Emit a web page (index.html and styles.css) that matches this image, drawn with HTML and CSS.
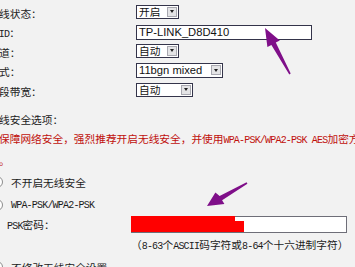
FILE: index.html
```html
<!DOCTYPE html>
<html lang="zh">
<head>
<meta charset="utf-8">
<title>无线设置</title>
<link rel="stylesheet" href="styles.css">
</head>
<body>
<div class="page">
  <div class="form">
    <div class="row">
      <span class="label">无线状态：</span>
      <div class="select w43"><span class="val">开启</span><span class="btn"></span></div>
    </div>
    <div class="row">
      <span class="label"><span class="mono">SSID</span>：</span>
      <div class="input w176"><span class="val en">TP-LINK_D8D410</span></div>
    </div>
    <div class="row">
      <span class="label">信道：</span>
      <div class="select w43"><span class="val">自动</span><span class="btn"></span></div>
    </div>
    <div class="row">
      <span class="label">模式：</span>
      <div class="select w87"><span class="val en">11bgn mixed</span><span class="btn"></span></div>
    </div>
    <div class="row">
      <span class="label">频段带宽：</span>
      <div class="select w57"><span class="val">自动</span><span class="btn"></span></div>
    </div>
  </div>
  <div class="security">
    <div class="title">无线安全选项：</div>
    <p class="warn">为保障网络安全，强烈推荐开启无线安全，并使用<span class="mono">WPA-PSK/WPA2-PSK AES</span>加密方<br>式。</p>
    <div class="radio r1"><span class="dot"></span><span>不开启无线安全</span></div>
    <div class="radio r2"><span class="dot"></span><span class="mono">WPA-PSK/WPA2-PSK</span></div>
    <div class="psk">
      <span class="psk-label"><span class="mono">PSK</span>密码：</span>
      <div class="pwd"><span class="redact a"></span><span class="redact b"></span></div>
    </div>
    <div class="hint">（<span class="mono">8-63</span>个<span class="mono">ASCII</span>码字符或<span class="mono">8-64</span>个十六进制字符）</div>
    <div class="radio"><span class="dot"></span><span>不修改无线安全设置</span></div>
  </div>
</div>
<svg class="arrows" width="355" height="267" viewBox="0 0 355 267">
  <polygon points="265,28 279.8,40.5 275.8,42.6 290.7,73.6 289.3,74.4 271.4,45 267.4,47.1"/>
  <polygon points="207,206 224.4,204.1 222.1,200.2 247.4,183.7 246.6,182.3 219.6,195.9 215.4,192.6"/>
</svg>
</body>
</html>
```
FILE: styles.css
```css
html, body {
  margin: 0;
  width: 355px;
  height: 267px;
  overflow: hidden;
  background: #f2f2f2;
}
body {
  position: relative;
  font-family: "Noto Sans CJK SC", sans-serif;
  font-size: 10.7px;
  color: #1c1c1c;
}
.page {
  margin-left: -11.7px;
  padding-top: 3.5px;
}
.row {
  display: grid;
  grid-template-columns: 147.7px auto;
  height: 19.5px;
  align-items: center;
  justify-items: start;
}
.label {
  line-height: 19.5px;
  white-space: nowrap;
}
.select, .input {
  box-sizing: border-box;
  height: 14.5px;
  border: 1px solid #34344a;
  background: #fff;
  display: flex;
  align-items: center;
  margin-bottom: 3px;
}
.w43 { width: 43px; }
.w57 { width: 57px; }
.w87 { width: 87px; }
.w176 { width: 176px; }
.val {
  flex: 1;
  padding-left: 2px;
  line-height: 12px;
  white-space: nowrap;
  color: #111;
}
.en {
  font-family: "Liberation Sans", sans-serif;
  font-size: 11.2px;
}
.btn {
  flex: none;
  width: 10px;
  height: 10px;
  box-sizing: border-box;
  border: 1px solid #a8a8b0;
  background: #e4e4e6;
  margin-right: 1px;
  display: flex;
  align-items: center;
  justify-content: center;
}
.btn::after {
  content: "";
  border-left: 2.5px solid transparent;
  border-right: 2.5px solid transparent;
  border-top: 3px solid #222;
}
.security {
  margin-top: 9px;
}
.title {
  line-height: 19px;
  white-space: nowrap;
}
.warn {
  margin: 0;
  color: #c0100c;
  line-height: 19.5px;
  white-space: nowrap;
}
.mono {
  font-family: "Liberation Mono", monospace;
  font-size: 10px;
  letter-spacing: -0.8px;
}
.radio {
  display: flex;
  align-items: center;
  gap: 8px;
  height: 20px;
  padding-left: 2.7px;
  white-space: nowrap;
}
.r1 { margin-top: 2px; }
.r2 { margin-top: 3px; }
.dot {
  flex: none;
  width: 12px;
  height: 12px;
  box-sizing: border-box;
  border: 1px solid #8c8c8c;
  border-radius: 50%;
  background: #fff;
}
.psk {
  display: grid;
  grid-template-columns: 142.7px auto;
  height: 18px;
  align-items: center;
}
.psk-label {
  padding-left: 18.7px;
  white-space: nowrap;
}
.pwd {
  position: relative;
  width: 216px;
  height: 17px;
  box-sizing: border-box;
  border: 1px solid #6e6e78;
  background: #fff;
}
.redact {
  position: absolute;
  background: #f00;
}
.redact.a {
  left: -1px;
  top: -1px;
  width: 104px;
  height: 16px;
}
.redact.b {
  left: 103px;
  top: 4px;
  width: 9px;
  height: 11px;
}
.hint {
  margin-top: 2px;
  line-height: 20px;
  padding-left: 142.7px;
  white-space: nowrap;
}
.arrows {
  position: absolute;
  left: 0;
  top: 0;
  pointer-events: none;
}
.arrows polygon {
  fill: #7f0f89;
}
```
